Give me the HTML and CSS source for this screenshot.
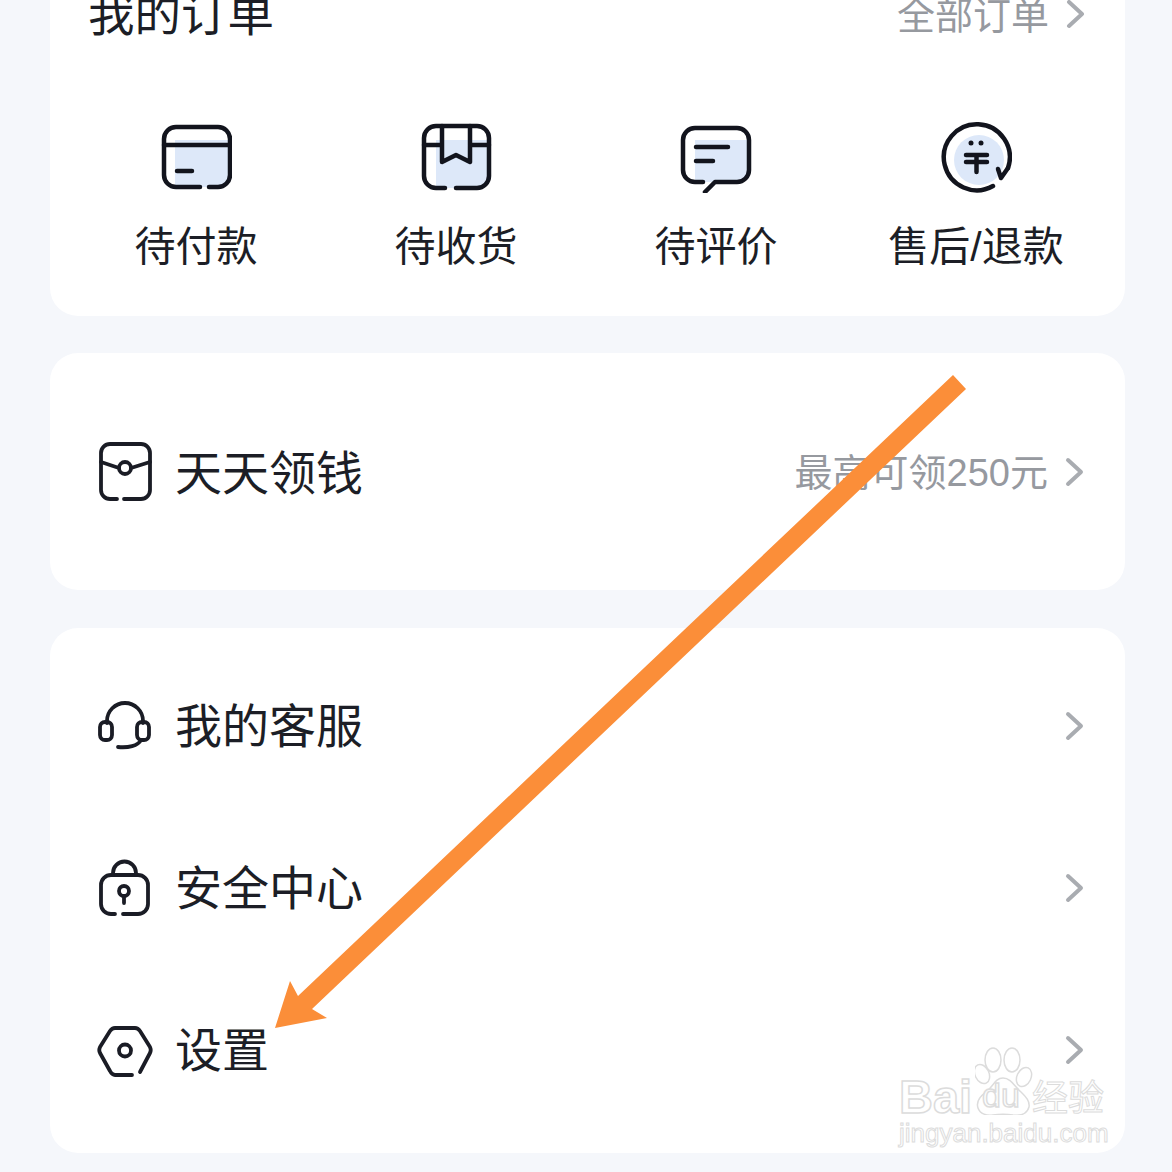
FILE: index.html
```html
<html lang="zh-CN">
<head>
    <meta charset="UTF-8">
    <meta name="viewport" content="width=device-width, initial-scale=1.0">
    <title>我的订单</title>
    <link rel="stylesheet" href="styles.css">
</head>
<body>
    <div class="page">
        <div class="card orders">
            <div class="orders-head">
                <span class="orders-title">我的订单</span>
                <span class="more">全部订单</span>
                <svg class="chevron" viewBox="0 0 20 30"><path d="M3 3l13 12L3 27"/></svg>
            </div>
            <div class="orders-grid">
                <div class="order-item">
                    <svg class="order-icon" viewBox="0 0 72 72">
                        <path class="tint" d="M15 19H70V54a12 12 0 0 1-12 12H15z"/>
                        <path d="M40 66H16A12 12 0 0 1 4 54V18A12 12 0 0 1 16 6H58a12 12 0 0 1 12 12V54a12 12 0 0 1-12 12H49"/>
                        <path d="M4 24H70M17 50H32"/>
                    </svg>
                    <span>待付款</span>
                </div>
                <div class="order-item">
                    <svg class="order-icon" viewBox="0 0 72 72">
                        <path class="tint" d="M16 19H69V55a12 12 0 0 1-12 12H16z"/>
                        <path d="M25 67H16A12 12 0 0 1 4 55V17A12 12 0 0 1 16 5H57a12 12 0 0 1 12 12V55a12 12 0 0 1-12 12H36"/>
                        <path d="M4 24H22M50 24H69M22 5V41L36 34L50 41V5"/>
                    </svg>
                    <span>待收货</span>
                </div>
                <div class="order-item">
                    <svg class="order-icon" viewBox="0 0 72 72">
                        <path class="tint" d="M15 19H69V49a12 12 0 0 1-12 12H15z"/>
                        <path d="M23 61H15A12 12 0 0 1 3 49V19A12 12 0 0 1 15 7H57a12 12 0 0 1 12 12V49a12 12 0 0 1-12 12H35L25 71"/>
                        <path d="M16 26H48M16 40H33"/>
                    </svg>
                    <span>待评价</span>
                </div>
                <div class="order-item">
                    <svg class="order-icon" viewBox="0 0 72 72">
                        <circle class="tint" cx="39" cy="39" r="25"/>
                        <path d="M53 65A33 33 0 1 1 68 47"/>
                        <path d="M58 48L61 57L68 47M26 34H47M26 41H47M36.500 34V51"/>
                        <circle class="dot" cx="31" cy="22" r="2.500"/>
                        <circle class="dot" cx="41" cy="22" r="2.500"/>
                    </svg>
                    <span>售后/退款</span>
                </div>
            </div>
        </div>

        <div class="card earn">
            <div class="row">
                <svg class="row-icon" viewBox="0 0 60 60">
                    <path d="M22 57H15A9 9 0 0 1 6 48V11A9 9 0 0 1 15 2H46a9 9 0 0 1 9 9V48a9 9 0 0 1-9 9H29"/>
                    <path d="M6 20L24 26M55 20L36 26"/>
                    <circle cx="30" cy="26" r="6"/>
                </svg>
                <span class="row-label">天天领钱</span>
                <span class="more">最高可领250元</span>
                <svg class="chevron" viewBox="0 0 20 30"><path d="M3 3l13 12L3 27"/></svg>
            </div>
        </div>

        <div class="card menu">
            <div class="row">
                <svg class="row-icon" viewBox="0 0 60 60">
                    <path d="M12 27V25A18 18 0 0 1 48 25V27"/>
                    <rect x="5" y="26" width="12" height="18" rx="5"/>
                    <rect x="42" y="26" width="12" height="18" rx="5"/>
                    <path d="M46 44C43 50 33 52 23 51"/>
                </svg>
                <span class="row-label">我的客服</span>
                <svg class="chevron" viewBox="0 0 20 30"><path d="M3 3l13 12L3 27"/></svg>
            </div>
            <div class="row">
                <svg class="row-icon" viewBox="0 0 60 60">
                    <path d="M20 56H16A10 10 0 0 1 6 46V27A10 10 0 0 1 16 17H43a10 10 0 0 1 10 10V46a10 10 0 0 1-10 10H28"/>
                    <path d="M18 17V15A11.500 11.500 0 0 1 41 15V17"/>
                    <circle cx="29" cy="33" r="5"/>
                    <path d="M29 38V45"/>
                </svg>
                <span class="row-label">安全中心</span>
                <svg class="chevron" viewBox="0 0 20 30"><path d="M3 3l13 12L3 27"/></svg>
            </div>
            <div class="row">
                <svg class="row-icon" viewBox="0 0 60 60">
                    <path d="M45 52L55 33Q56.500 30 55 27L45 11Q43 8 40 8H20Q17 8 15 11L5 27Q3.500 30 5 33L15 51Q17 55 20 55H37"/>
                    <circle cx="30" cy="30.500" r="6"/>
                </svg>
                <span class="row-label">设置</span>
                <svg class="chevron" viewBox="0 0 20 30"><path d="M3 3l13 12L3 27"/></svg>
            </div>
        </div>
    </div>

    <svg class="arrow" viewBox="0 0 1172 1172">
        <polygon points="953,375 966,389 312,1009 327,1018 275,1028 290,981 298,996"/>
    </svg>

    <div class="watermark">
        <svg class="paw" viewBox="0 0 60 70">
            <ellipse cx="18" cy="15" rx="8" ry="12"/>
            <ellipse cx="37" cy="15" rx="8" ry="12"/>
            <ellipse cx="7" cy="29" rx="7" ry="10" transform="rotate(-25 7 29)"/>
            <ellipse cx="49" cy="32" rx="7" ry="10" transform="rotate(25 49 32)"/>
            <path d="M28 33C20 33 18 42 11 47C4 52 1 57 3 63C5 69 12 71 18 70C24 69 32 69 38 70C45 71 52 69 54 62C55 56 51 52 46 47C40 42 36 33 28 33z"/>
        </svg>
        <span class="wm-bai">Bai</span>
        <span class="wm-du">du</span>
        <span class="wm-cn">经验</span>
        <span class="wm-url">jingyan.baidu.com</span>
    </div>
</body>
</html>
```

FILE: styles.css
```css
html, body {
    margin: 0;
    height: 1172px;
    overflow: hidden;
}
body {
    position: relative;
    font-family: "Liberation Sans", "Noto Sans CJK SC", sans-serif;
    background-color: #f5f7fb;
    color: #1c1e26;
}
.page {
    display: flex;
    flex-direction: column;
    gap: 37px;
    margin-top: -60px;
    padding: 0 47px 0 50px;
}
.card {
    background-color: #fff;
    border-radius: 28px;
}
.chevron {
    width: 20px;
    height: 30px;
    flex: none;
    fill: none;
    stroke: #a9acb1;
    stroke-width: 4;
    stroke-linecap: round;
    stroke-linejoin: round;
}
.more {
    margin-right: 17px;
    padding-bottom: 4px;
    font-size: 38px;
    color: #96999f;
}

/* orders */
.orders {
    padding: 44px 19px 44px 16px;
}
.orders-head {
    display: flex;
    align-items: center;
    justify-content: space-between;
    height: 60px;
    padding: 0 20px 0 23px;
}
.orders-head .more {
    margin-left: auto;
}
.orders-title {
    margin-left: -1px;
    padding-bottom: 8px;
    font-size: 46.500px;
}
.orders-grid {
    display: grid;
    grid-template-columns: repeat(4, 260px);
    margin-top: 77px;
}
.order-item {
    display: flex;
    flex-direction: column;
    align-items: center;
    gap: 29px;
    font-size: 41px;
    line-height: 50px;
}
.order-icon {
    width: 72px;
    height: 72px;
    margin-right: 1px;
}
.order-icon path, .order-icon circle {
    fill: none;
    stroke: #12141d;
    stroke-width: 4.500;
    stroke-linecap: round;
    stroke-linejoin: round;
}
.order-icon .tint {
    fill: #dde8f9;
    stroke: none;
}
.order-icon .dot {
    fill: #12141d;
    stroke: none;
}

/* rows */
.row {
    display: flex;
    align-items: center;
    height: 162px;
    padding: 0 40px 0 45px;
}
.row-label {
    margin-right: auto;
    padding-bottom: 5px;
    font-size: 47px;
}
.earn {
    display: flex;
    flex-direction: column;
    justify-content: center;
    height: 237px;
}
.menu {
    margin-top: 1px;
    padding: 17px 0 22px;
}
.menu .row-label {
    padding-bottom: 8px;
}
.row-icon {
    width: 60px;
    height: 60px;
    flex: none;
    margin-right: 20px;
    fill: none;
    stroke: #1a1c25;
    stroke-width: 3.800;
    stroke-linecap: round;
    stroke-linejoin: round;
}

/* overlays */
.arrow {
    position: absolute;
    left: 0;
    top: 0;
    width: 1172px;
    height: 1172px;
    fill: #fb8e39;
}
.watermark {
    position: absolute;
    left: 890px;
    top: 1040px;
    width: 230px;
    height: 120px;
    color: rgba(255, 255, 255, 0.85);
    -webkit-text-stroke: 1.500px #dcdcdc;
}
.paw {
    position: absolute;
    left: 85px;
    top: 5px;
    width: 60px;
    height: 70px;
    fill: rgba(255, 255, 255, 0.7);
    stroke: #dcdcdc;
    stroke-width: 1.500;
}
.wm-bai, .wm-du, .wm-cn, .wm-url {
    position: absolute;
    white-space: nowrap;
}
.wm-bai {
    left: 9px;
    top: 29px;
    font-size: 47px;
    font-weight: bold;
}
.wm-du {
    left: 92px;
    top: 36px;
    font-size: 34px;
}
.wm-cn {
    left: 142px;
    top: 41px;
    font-size: 36px;
    line-height: 36px;
    -webkit-text-stroke-width: 1px;
}
.wm-url {
    left: 9px;
    top: 80px;
    font-size: 26px;
    line-height: 26px;
    -webkit-text-stroke-width: 1px;
}
```
